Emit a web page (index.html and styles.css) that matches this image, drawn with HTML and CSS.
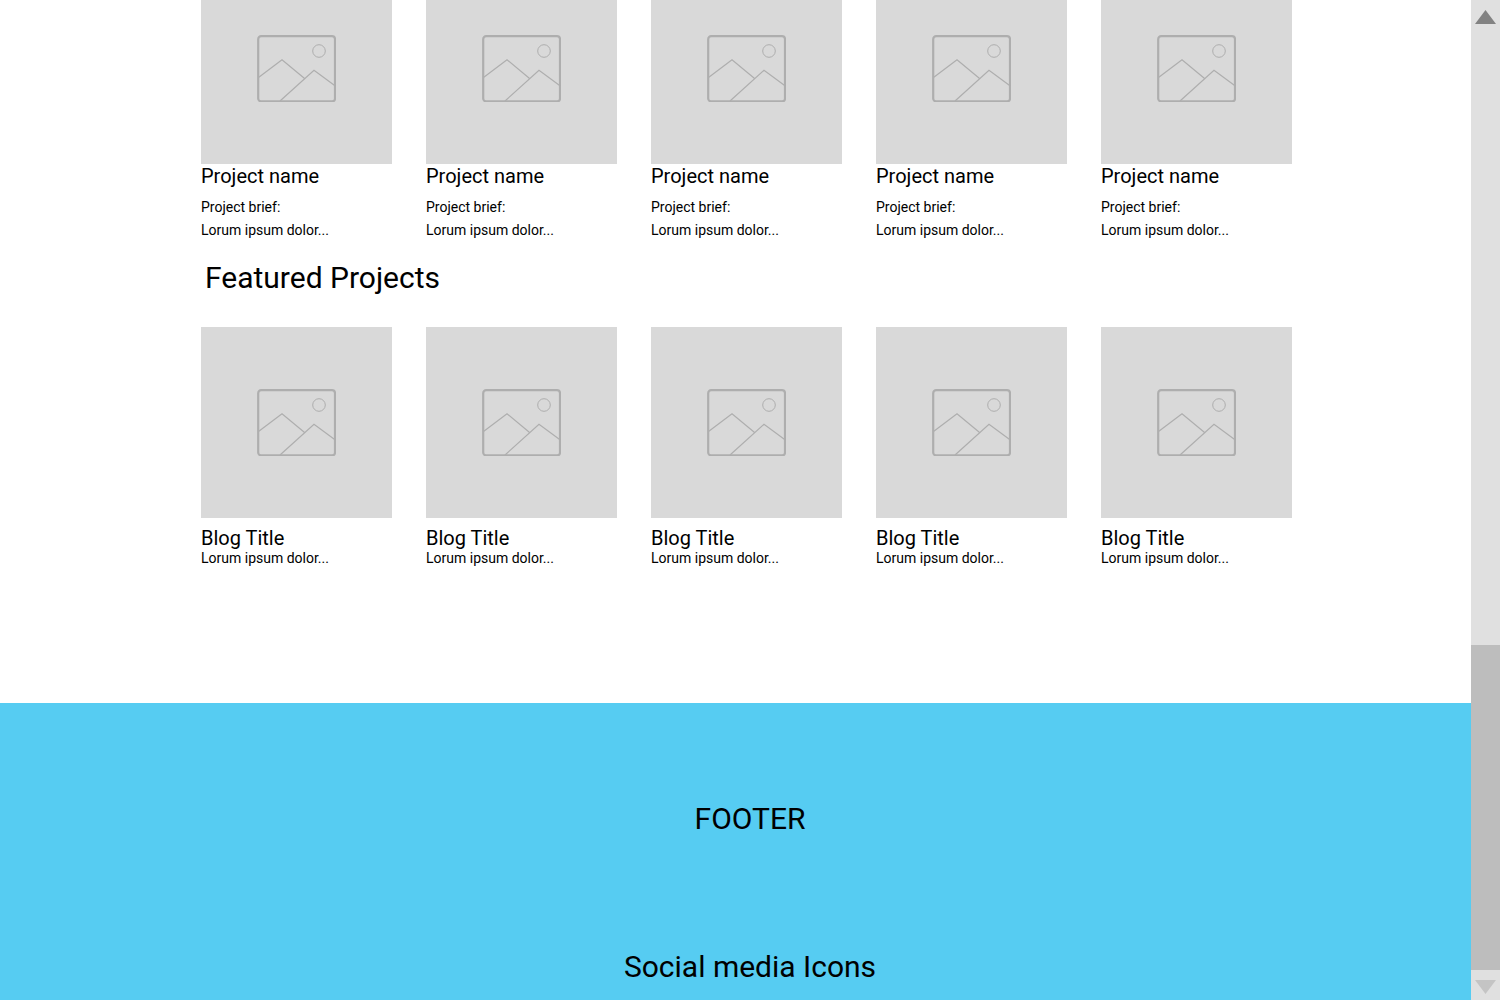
FILE: index.html
```html
<!DOCTYPE html>
<html lang="en">
<head>
<meta charset="utf-8">
<meta name="viewport" content="width=device-width, initial-scale=1">
<title>Projects</title>
<link rel="stylesheet" href="styles.css">
</head>
<body>
<svg class="sprite" aria-hidden="true">
  <symbol id="picture" viewBox="0 0 79 67">
    <rect x="1.2" y="1.2" width="76.8" height="65.2" rx="3" stroke-width="2.2"/>
    <path d="M1.5 42.6 25 24.7 47.3 43.3M23 66 57 35.3 78 50.7" stroke-width="1.2"/>
    <circle cx="62" cy="16" r="6.3" stroke-width="1"/>
  </symbol>
</svg>
<main class="content">
  <section class="cards cards-scrolled">
    <article class="card">
      <div class="thumb"><svg class="picture"><use href="#picture"/></svg></div>
      <h3 class="title">Project name</h3>
      <p class="brief">Project brief:<br>Lorum ipsum dolor...</p>
    </article>
    <article class="card">
      <div class="thumb"><svg class="picture"><use href="#picture"/></svg></div>
      <h3 class="title">Project name</h3>
      <p class="brief">Project brief:<br>Lorum ipsum dolor...</p>
    </article>
    <article class="card">
      <div class="thumb"><svg class="picture"><use href="#picture"/></svg></div>
      <h3 class="title">Project name</h3>
      <p class="brief">Project brief:<br>Lorum ipsum dolor...</p>
    </article>
    <article class="card">
      <div class="thumb"><svg class="picture"><use href="#picture"/></svg></div>
      <h3 class="title">Project name</h3>
      <p class="brief">Project brief:<br>Lorum ipsum dolor...</p>
    </article>
    <article class="card">
      <div class="thumb"><svg class="picture"><use href="#picture"/></svg></div>
      <h3 class="title">Project name</h3>
      <p class="brief">Project brief:<br>Lorum ipsum dolor...</p>
    </article>
  </section>
  <h2 class="heading">Featured Projects</h2>
  <section class="cards">
    <article class="card">
      <div class="thumb"><svg class="picture"><use href="#picture"/></svg></div>
      <h3 class="title blog-title">Blog Title</h3>
      <p class="excerpt">Lorum ipsum dolor...</p>
    </article>
    <article class="card">
      <div class="thumb"><svg class="picture"><use href="#picture"/></svg></div>
      <h3 class="title blog-title">Blog Title</h3>
      <p class="excerpt">Lorum ipsum dolor...</p>
    </article>
    <article class="card">
      <div class="thumb"><svg class="picture"><use href="#picture"/></svg></div>
      <h3 class="title blog-title">Blog Title</h3>
      <p class="excerpt">Lorum ipsum dolor...</p>
    </article>
    <article class="card">
      <div class="thumb"><svg class="picture"><use href="#picture"/></svg></div>
      <h3 class="title blog-title">Blog Title</h3>
      <p class="excerpt">Lorum ipsum dolor...</p>
    </article>
    <article class="card">
      <div class="thumb"><svg class="picture"><use href="#picture"/></svg></div>
      <h3 class="title blog-title">Blog Title</h3>
      <p class="excerpt">Lorum ipsum dolor...</p>
    </article>
  </section>
</main>
<footer class="footer">
  <p class="footer-text">FOOTER</p>
  <p class="footer-text">Social media Icons</p>
</footer>
<div class="scrollbar">
  <button class="arrow" type="button" aria-label="Scroll up">
    <svg width="21" height="14" viewBox="0 0 21 14"><path d="M10.5 0 21 14H0z" fill="#828282"/></svg>
  </button>
  <div class="track"><div class="handle"></div></div>
  <button class="arrow" type="button" aria-label="Scroll down">
    <svg width="21" height="14" viewBox="0 0 21 14"><path d="M0 0h21L10.5 14z" fill="#c4c4c4"/></svg>
  </button>
</div>
</body>
</html>
```
FILE: styles.css
```css
* {
  box-sizing: border-box;
}

body {
  display: flex;
  flex-direction: column;
  min-height: 100vh;
  margin: 0;
  background: #fff;
  color: #000;
  font-family: Roboto, "Liberation Sans", sans-serif;
}

h2, h3, p {
  margin: 0;
  font-weight: 400;
}

.sprite {
  display: none;
}

.content {
  padding: 0 208px 137px 201px;
  overflow: hidden;
}

.cards {
  display: grid;
  grid-template-columns: repeat(5, 1fr);
  gap: 34px;
}

/* The first row is partly scrolled out of view. */
.cards-scrolled {
  margin-top: -27px;
}

.thumb {
  display: flex;
  align-items: center;
  justify-content: center;
  aspect-ratio: 1;
  background: #d9d9d9;
}

.picture {
  width: 79px;
  height: 67px;
  fill: none;
  stroke: #aeaeae;
}

.title {
  font-size: 20px;
  line-height: 24px;
}

.blog-title {
  margin-top: 8px;
}

.brief {
  margin-top: 8px;
  font-size: 14px;
  line-height: 23px;
}

.excerpt {
  font-size: 14px;
  line-height: 16px;
}

.heading {
  margin: 18px 0 31px 4px;
  font-size: 30px;
  line-height: 36px;
}

.footer {
  display: flex;
  flex: 1;
  flex-direction: column;
  gap: 112px;
  padding: 98px 0 15px;
  background: #56ccf2;
  text-align: center;
}

.footer-text {
  font-size: 30px;
  line-height: 36px;
}

.scrollbar {
  position: fixed;
  top: 0;
  right: 0;
  bottom: 0;
  display: flex;
  flex-direction: column;
  width: 29px;
  background: #e0e0e0;
}

.arrow {
  display: flex;
  align-items: center;
  justify-content: center;
  height: 30px;
  padding: 4px 0 0;
  border: 0;
  background: none;
}

.track {
  display: flex;
  flex: 1;
  flex-direction: column;
  justify-content: flex-end;
}

.handle {
  height: 325px;
  background: #bdbdbd;
}
```
